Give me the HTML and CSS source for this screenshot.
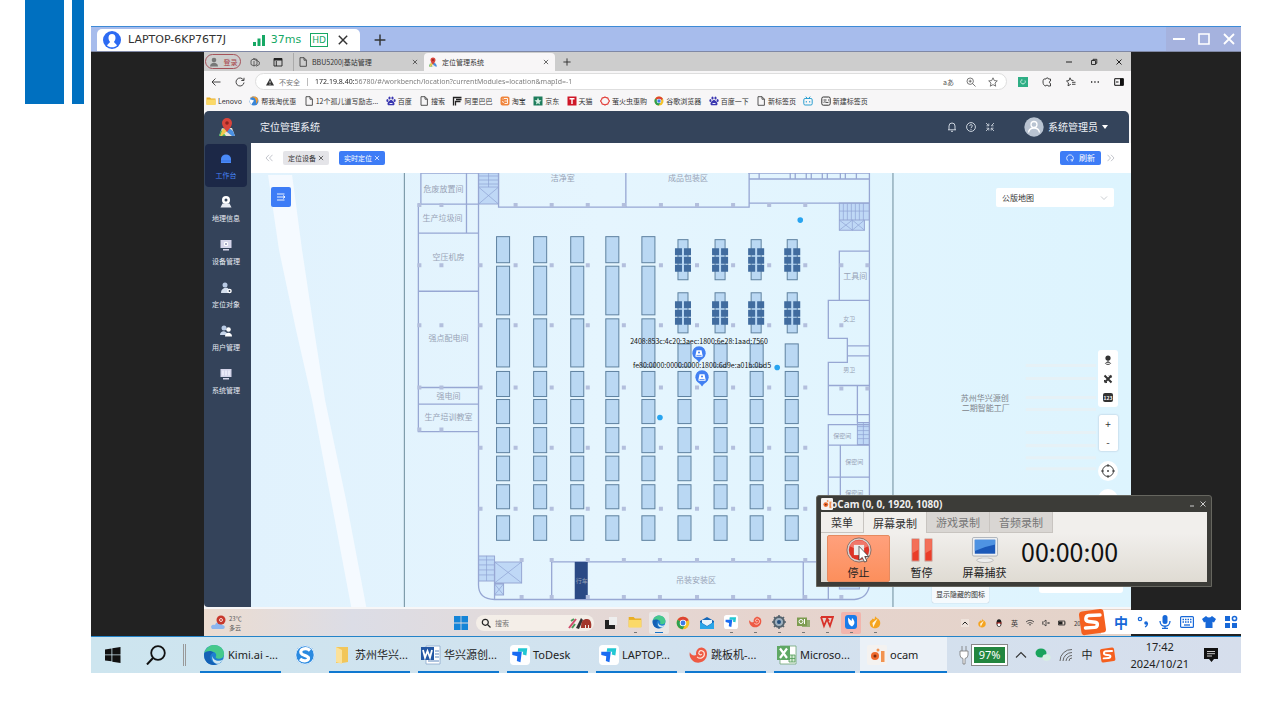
FILE: index.html
```html
<!DOCTYPE html>
<html lang="zh-CN">
<head>
  <meta charset="UTF-8">
  <meta name="viewport" content="width=device-width, initial-scale=1.0">
  <title>定位管理系统</title>
  <link rel="stylesheet" href="styles.css">
</head>
<body>
  <svg class="sprite" aria-hidden="true">
    <symbol id="i-page" viewBox="0 0 10 10"><path d="M2 .7h4l2.400 2.400v6.200H2zM6 .7v2.500h2.400" fill="none" stroke="#444" stroke-width=".9"/></symbol>
    <symbol id="i-x" viewBox="0 0 10 10"><path d="M1.500 1.500l7 7M8.500 1.500l-7 7" fill="none" stroke="currentColor" stroke-width="1.200"/></symbol>
    <symbol id="i-plus" viewBox="0 0 10 10"><path d="M5 .5v9M.5 5h9" fill="none" stroke="currentColor" stroke-width="1.200"/></symbol>
    <symbol id="i-paw" viewBox="0 0 10 10"><g fill="#3a36b0"><ellipse cx="3.500" cy="2" rx="1.100" ry="1.600"/><ellipse cx="6.500" cy="2" rx="1.100" ry="1.600"/><ellipse cx="1.400" cy="4.400" rx="1" ry="1.500"/><ellipse cx="8.600" cy="4.400" rx="1" ry="1.500"/><path d="M5 4c1.600 0 3.800 2.600 3.500 4.200C8.200 9.700 6.500 9.300 5 9.300s-3.200.4-3.500-1.100C1.200 6.600 3.400 4 5 4z"/></g><path d="M3.500 7.500h3" stroke="#fff" stroke-width=".9"/></symbol>
    <symbol id="i-map" viewBox="0 0 20 20"><path d="M2 19l3-8h10l3 8z" fill="#e9e4d8"/><path d="M2 19l2-6 5 6z" fill="#3fae5a"/><path d="M5 11l10 8h3l-2-5-4-3z" fill="#4a90e2"/><path d="M6 11l4 3-5 5H3z" fill="#f2c94c"/><path d="M10 15C7 11 5 9 5 6a5 5 0 0110 0c0 3-2 5-5 9z" fill="#d9443b"/><circle cx="10" cy="6" r="1.800" fill="#8c2420"/></symbol>
    <symbol id="i-edge" viewBox="0 0 24 24"><circle cx="12" cy="12" r="11" fill="#1d7fd0"/><path d="M1.300 10C3 3.500 8 1 12 1c7 0 11 5 11 9.500 0 4-3 5.500-6 5.500-2.500 0-3.500-1-3-2 1-1.500.5-5-3.500-5.500C6.500 8 2.500 9 1.300 10z" fill="#45c98c"/><path d="M1.300 10C4 7 10 7 11.500 9.500c-3 .5-4.500 4-3 7.500 1.500 3.500 5 5 8 4.500C9 25.500 0 20 1.300 10z" fill="#1461b5"/><path d="M10.500 13c0 4.500 6 7 11.500 4-1.500 2.500-3 3.600-5 4.500-4.500.5-8-4-6.500-8.500z" fill="#cfe6f2"/></symbol>
    <symbol id="i-chrome" viewBox="0 0 20 20"><circle cx="10" cy="10" r="9" fill="#f4c22b"/><path d="M10 10L2.200 5.500A9 9 0 0117.800 5.500L18 6z" fill="#dd4334"/><path d="M2.200 5.500A9 9 0 009.500 19l4-7L10 10z" fill="#2d9f50"/><circle cx="10" cy="10" r="4.600" fill="#fff"/><circle cx="10" cy="10" r="3.500" fill="#3c7be8"/></symbol>
    <symbol id="i-todesk" viewBox="0 0 22 22"><rect width="22" height="22" rx="4" fill="#fff"/><path d="M9 3.500h10l-1 8-4-1 .5-3H8.500z" fill="#22c7d2"/><path d="M2.500 7.500H13L11.500 19l-4-1.500.5-5L2.500 11z" fill="#1a6cf2"/></symbol>
    <symbol id="i-shell" viewBox="0 0 22 22"><path d="M2 8c2 4 5 4 7 3-1-5 3-9 7-8 5 1 6 7 4 11-3 6-11 7-15 3-2-2-4-5-3-9z" fill="#ee5a44"/><path d="M10 13c3 3 8 1 8-3s-5-5-6-2c-1 2 2 4 3 2" fill="none" stroke="#ffe6dc" stroke-width="1.300"/></symbol>
    <symbol id="i-flame" viewBox="0 0 16 16"><path d="M8 1c1.500 3 6 3 6 8 0 4-3 6-6 6s-6-2-6-6c0-3 3-3 3-5 1 0 2 1 2 1 1-1 1-3 1-4z" fill="#f5a41f"/><path d="M11 4L6 14l-1-5z" fill="#fff4dc"/></symbol>
    <symbol id="i-sogou" viewBox="0 0 26 26"><rect x="1" y="2" width="23" height="22" rx="3" fill="#f5601f" transform="rotate(-8 13 13)"/><path d="M19.500 6.500L9 7c-3 .3-4 5 0 5.500l6 .8c3 .5 2.500 4.500-.5 4.700L6 18.500" fill="none" stroke="#fff" stroke-width="3.200" stroke-linecap="round"/></symbol>
    <symbol id="i-ocam" viewBox="0 0 20 20"><rect width="20" height="20" rx="2" fill="#f4f2f0"/><circle cx="8" cy="11" r="4" fill="#ef6a2c"/><circle cx="8" cy="11" r="1.500" fill="#7a2b10"/><rect x="14" y="6" width="3.500" height="11" fill="#f29350"/><circle cx="11" cy="5" r="1.500" fill="#f29350"/></symbol>
    <symbol id="i-folder" viewBox="0 0 20 20"><path d="M1 3h7l2 2h9v12H1z" fill="#e9ae24"/><path d="M1 7h18v11H1z" fill="#fbd968"/></symbol>
  </svg>

  <div class="slide">
    <div class="stripes"><i class="stripe wide"></i><i class="stripe"></i></div>

    <main class="remote">
      <header class="remote-bar">
        <div class="remote-tab">
          <svg class="s18" viewBox="0 0 18 18"><circle cx="9" cy="9" r="9" fill="#2d6bf3"/><path d="M5.500 7a3.500 4 0 017 0c0 2-1 3-1.600 4l3.100 3.300C12 17 6 17 4 14.300L7.100 11C6.500 10 5.500 9 5.500 7z" fill="#fff"/></svg>
          <span class="remote-name">LAPTOP-6KP76T7J</span>
          <svg class="s12" viewBox="0 0 12 12"><path d="M0 8h3v4H0zM4.500 4.500h3V12h-3zM9 1h3v11H9z" fill="#16a864"/></svg>
          <span class="ping">37ms</span>
          <span class="hd">HD</span>
          <button class="plain" type="button" aria-label="关闭会话"><svg class="s12" aria-hidden="true"><use href="#i-x"/></svg></button>
        </div>
        <button class="plain add" type="button" aria-label="新建会话"><svg class="s12" aria-hidden="true"><use href="#i-plus"/></svg></button>
        <div class="remote-controls">
          <button class="plain" type="button" aria-label="最小化"><svg class="s14" viewBox="0 0 14 14"><path d="M1 7h12" stroke="#fff" stroke-width="2"/></svg></button>
          <button class="plain" type="button" aria-label="最大化"><svg class="s14" viewBox="0 0 14 14"><path d="M2 2h10v10H2z" fill="none" stroke="#fff" stroke-width="1.600"/></svg></button>
          <button class="plain" type="button" aria-label="关闭"><svg class="s14" viewBox="0 0 14 14"><path d="M2 2l10 10M12 2L2 12" stroke="#fff" stroke-width="1.800"/></svg></button>
        </div>
      </header>

      <div class="stage">
        <div class="guest">
          <div class="tabs">
            <button class="profile" type="button"><svg class="s10" viewBox="0 0 10 10"><circle cx="5" cy="3" r="2.300" fill="#777"/><path d="M1 9.500c0-5 8-5 8 0z" fill="#777"/></svg>登录</button>
            <svg class="s10 tab-tool" viewBox="0 0 10 10"><path d="M1 3.500L4 1.500l3 1v5L4 9 1 7.500zM4 4v5M3 2l4 1.500L9.300 5v2.500L6 9.300" fill="none" stroke="#444" stroke-width=".8"/></svg>
            <svg class="s10" viewBox="0 0 10 10"><path d="M1 1.500h8v7.500H1zM3.300 4v5" fill="none" stroke="#222" stroke-width=".9"/><path d="M1 1h8v2.500H1z" fill="#222"/></svg>
            <div class="tab">
              <svg class="s10"><use href="#i-page"/></svg><span>BBU5200|基站管理</span>
              <button class="plain" type="button" aria-label="关闭标签页"><svg class="s6" aria-hidden="true"><use href="#i-x"/></svg></button>
            </div>
            <div class="tab active">
              <svg class="s10"><use href="#i-map"/></svg><span>定位管理系统</span>
              <button class="plain" type="button" aria-label="关闭标签页"><svg class="s6" aria-hidden="true"><use href="#i-x"/></svg></button>
            </div>
            <button class="plain new-tab" type="button" aria-label="新标签页"><svg class="s8" aria-hidden="true"><use href="#i-plus"/></svg></button>
            <div class="win-controls">
              <button class="plain" type="button" aria-label="最小化"><svg class="s8" viewBox="0 0 8 8"><path d="M1 4h6" stroke="#222"/></svg></button>
              <button class="plain" type="button" aria-label="还原"><svg class="s8" viewBox="0 0 8 8"><path d="M1.500 2.500h4v4h-4zM3 2.500V1.300h3.800v4H5.500" fill="none" stroke="#222" stroke-width=".9"/></svg></button>
              <button class="plain" type="button" aria-label="关闭"><svg class="s8" viewBox="0 0 8 8"><path d="M1.500 1.500l5 5M6.500 1.500l-5 5" stroke="#222"/></svg></button>
            </div>
          </div>

          <div class="address-row">
            <button class="plain nav" type="button" aria-label="后退"><svg class="s10" viewBox="0 0 10 10"><path d="M9.500 5H1M4.500 1.500L1 5l3.500 3.500" fill="none" stroke="#333" stroke-width=".9"/></svg></button>
            <button class="plain nav" type="button" aria-label="刷新页面"><svg class="s10" viewBox="0 0 10 10"><path d="M8.500 3A4 4 0 109 5.500M9 .8v2.700H6.300" fill="none" stroke="#333" stroke-width=".9"/></svg></button>
            <div class="address">
              <svg class="s8" viewBox="0 0 8 8"><path d="M4 .3L8 7.600H0z" fill="#333"/><path d="M4 2.800v2.500M4 6v.8" stroke="#fff" stroke-width=".8"/></svg>
              <label class="insecure" for="url">不安全</label>
              <input class="url" id="url" type="text" value="172.19.8.40:56780/#/workbench/location?currentModules=location&amp;mapId=-1">
              <span class="addr-icons">
                <span class="read">aあ</span>
                <svg class="s10" viewBox="0 0 10 10"><circle cx="4.200" cy="4.200" r="3.200" fill="none" stroke="#555" stroke-width=".8"/><path d="M6.500 6.500L9.500 9.500M2.700 4.200h3M4.200 2.700v3" stroke="#555" stroke-width=".8"/></svg>
                <svg class="s10" viewBox="0 0 10 10"><path d="M5 .8l1.300 2.800 3 .3L7 6l.7 3.200L5 7.600 2.300 9.200 3 6 .7 3.900l3-.3z" fill="none" stroke="#555" stroke-width=".8"/></svg>
              </span>
            </div>
            <div class="ext">
              <svg class="s10" viewBox="0 0 10 10"><path d="M0 0h10v10H0z" fill="#2fae85"/><path d="M3 3.500a2.300 2.300 0 104 0M3 3h1.500" fill="none" stroke="#d9f5ea" stroke-width=".9"/></svg>
              <svg class="s10" viewBox="0 0 10 10"><path d="M2 2h2c0-1.500 2.500-1.500 2.500 0H8.500v2C7 4 7 6.500 8.500 6.500V9H6C6 7.800 4 7.800 4 9 2 9 1 7 1 5s.4-2.600 1-3z" fill="none" stroke="#333" stroke-width=".9"/></svg>
              <svg class="s10" viewBox="0 0 10 10"><path d="M4 .8l1.100 2.400 2.400.3M2 8.800l.5-2.900L.5 4l2.500-.5L4 .8M2 8.800l2.800-1.500M6 5.300h3.500M6 7.300h3.500" fill="none" stroke="#333" stroke-width=".9"/></svg>
              <svg class="s10" viewBox="0 0 10 10"><path d="M1 5h1.300M4.300 5h1.300M7.600 5h1.300" stroke="#222" stroke-width="1.300"/></svg>
              <svg class="s10" viewBox="0 0 10 10"><path d="M.7 1.700h8.600v6.600H.7z" fill="none" stroke="#111"/><path d="M6 1.500h3.500v7H6z" fill="#111"/><path d="M2 5h2.500" stroke="#111"/></svg>
            </div>
          </div>

          <nav class="bookmarks">
            <a href="#"><svg class="s10"><use href="#i-folder"/></svg>Lenovo</a>
            <a href="#"><svg class="s10" viewBox="0 0 10 10"><circle cx="5" cy="5" r="4.500" fill="#3a86d8"/><path d="M1 2c3-2 7 0 6 6C9 6 9.500 3 8 1.500 6 0 2 0 1 2z" fill="#f29b2e"/><path d="M0 3l5 1.500L2 9z" fill="#fff"/></svg>帮我淘优惠</a>
            <a href="#"><svg class="s10"><use href="#i-page"/></svg>12个孤儿道写励志...</a>
            <a href="#"><svg class="s10"><use href="#i-paw"/></svg>百度</a>
            <a href="#"><svg class="s10"><use href="#i-page"/></svg>搜索</a>
            <a href="#"><svg class="s10" viewBox="0 0 10 10"><path d="M1.500 9.500V1.500h8M3.500 9.500v-4h5M4 3.500h5.500" fill="none" stroke="#222" stroke-width="1.300"/></svg>阿里巴巴</a>
            <a href="#"><svg class="s10" viewBox="0 0 10 10"><rect x=".5" y=".5" width="9" height="9" rx="2" fill="#f0853c"/><path d="M2.500 3h1M4 2.500h3.500v5H4.500M2.500 5l1 2M4.500 5h2.500" fill="none" stroke="#fff" stroke-width=".9"/></svg>淘宝</a>
            <a href="#"><svg class="s10" viewBox="0 0 10 10"><path d="M.5.500h9v9h-9z" fill="#1e7d5c"/><path d="M5 1.500l1 2.500 2.500.5-2 1.500.5 2.500-2-1.300-2 1.300.5-2.500-2-1.500L4 4z" fill="#d8f0e4"/></svg>京东</a>
            <a href="#"><svg class="s10" viewBox="0 0 10 10"><path d="M.5.500h9v9h-9z" fill="#cf1626"/><path d="M2.500 2.800h5M5 2.800V8" stroke="#fff" stroke-width="1.400"/></svg>天猫</a>
            <a href="#"><svg class="s10" viewBox="0 0 10 10"><path d="M5 1l1.300.7 1.500.3.6 1.500L9.500 5l-1.100 1.500L7.800 8l-1.500.3L5 9l-1.300-.7L2.200 8l-.6-1.500L.5 5l1.100-1.500L2.200 2l1.500-.3z" fill="none" stroke="#e23b36" stroke-width="1.200"/></svg>萤火虫惠购</a>
            <a href="#"><svg class="s10"><use href="#i-chrome"/></svg>谷歌浏览器</a>
            <a href="#"><svg class="s10"><use href="#i-paw"/></svg>百度一下</a>
            <a href="#"><svg class="s10"><use href="#i-page"/></svg>新标签页</a>
            <a href="#" aria-label="哔哩哔哩"><svg class="s10" viewBox="0 0 10 10"><rect x=".8" y="2.500" width="8.400" height="6.500" rx="1.300" fill="none" stroke="#2a9fd0"/><path d="M2.800.6l1.400 1.700M7.200.6L5.800 2.300M3.300 5v1.500M6.700 5v1.500" stroke="#2a9fd0"/></svg></a>
            <a href="#"><svg class="s10" viewBox="0 0 10 10"><rect x=".8" y="1" width="8.400" height="8.200" rx="1.500" fill="none" stroke="#333"/><path d="M2.500 4h3M7 4h1M2.500 6.300c1.500-1.300 3 1 5 0" fill="none" stroke="#333" stroke-width=".9"/></svg>新建标签页</a>
          </nav>

          <div class="app">
            <header class="app-head">
              <svg class="s20"><use href="#i-map"/></svg>
              <h1>定位管理系统</h1>
              <div class="head-tools">
                <svg class="s10" viewBox="0 0 10 10"><path d="M2 7.800V4a3 3 0 016 0v3.800M1 7.800h8M4 9.300h2" fill="none" stroke="#dde3ec" stroke-width=".9"/></svg>
                <svg class="s10" viewBox="0 0 10 10"><circle cx="5" cy="5" r="4.400" fill="none" stroke="#dde3ec" stroke-width=".9"/><path d="M3.700 4c0-2 2.800-1.700 2.600 0C6.200 5 5 5 5 6.200M5 7v.9" fill="none" stroke="#dde3ec" stroke-width=".9"/></svg>
                <svg class="s10" viewBox="0 0 10 10"><path d="M1 1l2.500 2.500M9 1L6.500 3.500M1 9l2.500-2.500M9 9L6.500 6.500M1.500 3.800h2.300V1.500M8.500 3.800H6.200M3.800 8.500V6.200H1.500M6.200 8.500V6.200h2.300" fill="none" stroke="#dde3ec" stroke-width=".8"/></svg>
              </div>
              <button class="user" type="button">
                <svg class="s20" viewBox="0 0 20 20"><circle cx="10" cy="10" r="9.700" fill="#b9c4d2"/><circle cx="10" cy="7.500" r="3" fill="none" stroke="#fff" stroke-width="1.300"/><path d="M4.500 15.500c1-6 10-6 11 0" fill="none" stroke="#fff" stroke-width="1.300"/></svg>
                系统管理员
                <svg class="s6" viewBox="0 0 6 6"><path d="M0 1h6L3 5z" fill="#fff"/></svg>
              </button>
            </header>

            <div class="app-body">
              <nav class="side">
                <a class="on" href="#"><svg class="s14" viewBox="0 0 14 14"><path d="M2 11V7a5 4.500 0 0110 0v4z" fill="#4a8af8"/><path d="M2 9h10" stroke="#2f66d8" stroke-width=".7"/></svg>工作台</a>
                <a href="#"><svg class="s14" viewBox="0 0 14 14"><circle cx="7" cy="5" r="4" fill="#fff"/><circle cx="7" cy="5" r="1.500" fill="#34445b"/><path d="M1.500 12.500l2-4h7l2 4z" fill="#e6eaf2"/></svg>地理信息</a>
                <a href="#"><svg class="s14" viewBox="0 0 14 14"><path d="M1.500 2h11v8h-11zM4 11h6v1.500H4z" fill="#d5d5ea"/><circle cx="7" cy="6" r="2.200" fill="#fff"/><circle cx="7" cy="6" r="1" fill="#8c90b5"/></svg>设备管理</a>
                <a href="#"><svg class="s14" viewBox="0 0 14 14"><circle cx="6" cy="4" r="2.500" fill="#b8cae4"/><path d="M2 12c0-6 7-6 7.500-4v4z" fill="#d4dfee"/><circle cx="10.500" cy="10" r="2.300" fill="#fff"/><circle cx="10.500" cy="10" r=".9" fill="#34445b"/></svg>定位对象</a>
                <a href="#"><svg class="s14" viewBox="0 0 14 14"><circle cx="5" cy="4" r="2.500" fill="#b8cae4"/><path d="M1 11c0-5 7-5 7.500 0z" fill="#c6d5ea"/><circle cx="9.500" cy="5.500" r="2.300" fill="#fff"/><path d="M6 12.500c0-5 7-5 7 0z" fill="#fff"/></svg>用户管理</a>
                <a href="#"><svg class="s14" viewBox="0 0 14 14"><path d="M1.500 2h11v8h-11zM4 11h6v1.500H4z" fill="#d5d5ea"/><path d="M4 3.500v5M7 3.500v5M10 3.500v5" stroke="#f7f7ff" stroke-width="1.200"/></svg>系统管理</a>
              </nav>

              <section class="content">
                <div class="pages">
                  <svg class="s8 chev" viewBox="0 0 8 8"><path d="M4 .8L1 4l3 3.200M7.500.8l-3 3.200 3 3.200" fill="none" stroke="#b5b8c0" stroke-width=".8"/></svg>
                  <button class="page-tab" type="button">定位设备<svg class="s6"><use href="#i-x"/></svg></button>
                  <button class="page-tab current" type="button">实时定位<svg class="s6"><use href="#i-x"/></svg></button>
                  <button class="refresh" type="button"><svg class="s8" viewBox="0 0 8 8"><path d="M2.300 7A3.300 3.300 0 115.700 7M4.500 5.800h1.700v1.700" fill="none" stroke="#fff" stroke-width=".8"/></svg>刷新</button>
                  <svg class="s8 chev" viewBox="0 0 8 8"><path d="M.5.800l3 3.200-3 3.200M4 .8L7 4 4 7.200" fill="none" stroke="#b5b8c0" stroke-width=".8"/></svg>
                </div>

                <div class="map">
                  <svg class="plan" viewBox="251 173 880 433" preserveAspectRatio="xMidYMid slice">
                    <defs>
                      <linearGradient id="ground" x1="0" x2="1" y1="0" y2="0">
                        <stop offset="0" stop-color="#e1f2fd"/><stop offset=".4" stop-color="#e5f5fe"/><stop offset="1" stop-color="#ddf4fe"/>
                      </linearGradient>
                      <g id="lower">
                        <rect y="371" width="13" height="25"/><rect y="399" width="13" height="24"/><rect y="427" width="13" height="25"/>
                        <rect y="455.500" width="13" height="24.500"/><rect y="484" width="13" height="24"/><rect y="515" width="13" height="24.500"/>
                      </g>
                      <g id="full">
                        <rect y="236.500" width="13" height="26"/><rect y="266" width="13" height="48.500"/><rect y="318.500" width="13" height="48"/>
                        <use href="#lower"/>
                      </g>
                      <g id="desk">
                        <rect width="10" height="40"/>
                        <path class="seat" d="M-3 8.500h7v7h-7zM6 8.500h7v7H6zM-3 17h7v7h-7zM6 17h7v7H6zM-3 25h7v7h-7zM6 25h7v7H6z"/>
                      </g>
                      <g id="short">
                        <use href="#desk" x="0" y="239.500"/><use href="#desk" x="0" y="292.500"/>
                      </g>
                      <path id="pillars" d="M-2-2h4v4h-4zM34-2h4v4h-4zM70-2h4v4h-4zM106-2h4v4h-4zM143-2h4v4h-4zM179-2h4v4h-4zM215-2h4v4h-4zM251-2h4v4h-4zM287-2h4v4h-4z"/>
                      <g id="pin">
                        <path d="M0 9l-3-4a6.500 6.500 0 116 0z" fill="#4280f2"/><circle r="6.500" fill="#4280f2"/>
                        <path d="M-3.500 3.300v-1.500l1-5h5l1 5v1.500z" fill="#fff"/><circle cy="-1" r="1" fill="#4280f2"/><path d="M-2.500 2h5" stroke="#4280f2" stroke-width=".8"/>
                      </g>
                    </defs>
                    <path d="M251 173h880v433H251z" fill="url(#ground)"/>
                    <path class="road" d="M269 175h24l10 75 12 80 11 70 21 100 20 106h-15l-20-106-19-100-16-70-17-80z"/>
                    <path class="haze" d="M1025 365h70M1025 378h70M1025 397h70M1025 409h70M1025 432h70M1025 445h70M1025 457h70M1025 468h70"/>
                    <path class="border" d="M405 173v433M892.500 173v433"/>

                    <g class="stairs">
                      <path d="M479 173h20v31h-20zM839 203h30v17h-30zM839 220h25v10h-25zM857 422h12v22h-12zM479 555h16v25h-16zM495 561h27v21h-27zM495 583h9v11h-9zM839 585h20v3h-20z"/>
                    </g>
                    <path class="thin" d="M489 173v14M479 176h20M479 180h20M479 184h20M479 187h20l-20 17M479 187l20 17M839 211h30M843 203v17M847 203v17M851 203v17M855 203v17M859 203v17M863 203v17M852 220v10M839 220l13 10M852 220l-13 10M852 220l12 10M864 220l-12 10M863 422v22M857 426h12M857 430h12M857 434h12M857 438h12M487 555v25M479 559h16M479 564h16M479 569h16M479 574h16M495 561l27 21M522 561l-27 21M495 583l9 11M504 583l-9 11"/>
                    <g class="walls">
                      <path d="M421.500 204v-31h57M467 173v60M419 204h60M419 233h60M419 291h60M419 387h60M419 403.500h60M419 204v227h60"/>
                      <path d="M499 173v34h250v-34M626 173v34M749 179h120M749 203h120M748 173h121M759 173v6M790 173v6M795 173v6M806 173v6M811 173v6M822 173v6M827 173v6M840 173v6M845 173v6M856 173v6"/>
                      <path d="M479 173v411q0 14 16 14.500h359q13-1 15-14V173"/>
                      <path d="M869 251h-30v49h-11v38h19v24h-19v52h41M839 300h30M847 345.500h22M847 355.500h22M828 385h41M857 385v37M869 424h-41v74M828 444.500h41M840 444v60M828 476.500h41"/>
                      <path d="M495 561v37M552 598v-37h276v37M803 561v37"/>
                    </g>
                    <path d="M575 561h13v37h-13z" fill="#2b4a85"/>
                    <g class="pillar">
                      <use href="#pillars" x="516" y="205"/><use href="#pillars" x="516" y="265"/><use href="#pillars" x="516" y="325"/>
                      <use href="#pillars" x="516" y="387"/><use href="#pillars" x="516" y="447"/><use href="#pillars" x="516" y="508"/>
                      <path d="M520 557h4v4h-4zM520 594h4v4h-4z"/>
                      <use href="#pillars" x="552" y="559"/><use href="#pillars" x="552" y="596"/>
                      <path d="M418 203h4v4h-4zM440 203h4v4h-4zM418 263h4v4h-4zM440 263h4v4h-4zM479 263h4v4h-4zM418 323h4v4h-4zM440 323h4v4h-4zM479 323h4v4h-4zM418 385h4v4h-4zM440 385h4v4h-4zM479 385h4v4h-4zM418 427h4v4h-4zM440 427h4v4h-4zM479 445h4v4h-4zM479 506h4v4h-4zM839 263h4v4h-4zM865 263h4v4h-4zM839 323h4v4h-4zM839 386h4v4h-4zM865 386h4v4h-4z"/>
                    </g>
                    <g class="rack">
                      <use href="#full" x="497"/><use href="#full" x="534"/><use href="#full" x="571"/><use href="#full" x="606"/><use href="#full" x="642"/>
                      <use href="#short" x="678"/><use href="#short" x="715"/><use href="#short" x="751"/><use href="#short" x="787"/>
                      <rect x="678" y="343.500" width="13" height="23"/><rect x="714" y="343.500" width="13" height="23"/><rect x="750" y="343.500" width="13" height="23"/><rect x="785" y="343.500" width="13" height="23"/>
                      <use href="#lower" x="678"/><use href="#lower" x="714"/><use href="#lower" x="750"/><use href="#lower" x="785"/>
                    </g>
                    <g class="label">
                      <text x="444" y="192">危废放置间</text><text x="443" y="221">生产垃圾间</text><text x="449" y="260">空压机房</text>
                      <text x="449" y="341">强点配电间</text><text x="449" y="398">强电间</text><text x="449" y="419">生产培训教室</text>
                      <text x="563" y="181">洁净室</text><text x="688" y="181">成品包装区</text><text x="696" y="582">吊装安装区</text><text x="855" y="279">工具间</text>
                    </g>
                    <g class="label small">
                      <text x="849" y="321">女卫</text><text x="849" y="372">男卫</text><text x="842" y="437">保密间</text><text x="854" y="463">保密间</text><text x="854" y="494">保密间</text><text x="582" y="582">行车</text>
                    </g>
                    <g class="label place"><text x="984" y="400">苏州华兴源创</text><text x="985" y="410">二期智能工厂</text></g>
                    <g fill="#28a4f0"><circle cx="800" cy="220" r="2.800"/><circle cx="777" cy="367" r="2.800"/><circle cx="660" cy="417" r="2.800"/></g>
                    <use href="#pin" x="699" y="353"/><use href="#pin" x="702" y="377"/>
                    <g class="ip"><text x="699" y="344">2408:853c:4c20:3aec:1800:6e28:1aad:7560</text><text x="702" y="368">fe80:0000:0000:0000:1800:6d9e:a01b:0bd5</text></g>
                  </svg>

                  <button class="toggle" type="button" aria-label="展开列表"><svg class="s10" viewBox="0 0 10 10"><path d="M1 2h7.500M1 5h8M1 8h7.500M7 3.500L9 5 7 6.500" fill="none" stroke="#fff" stroke-width=".9"/></svg></button>
                  <div class="picker">
                    <select aria-label="地图"><option>公版地图</option></select>
                    <svg class="s8" viewBox="0 0 8 8"><path d="M1 2.500l3 3 3-3" fill="none" stroke="#c3c6cc" stroke-width=".9"/></svg>
                  </div>
                  <div class="map-tools">
                    <div class="tool-card">
                      <button class="plain" type="button" aria-label="位置"><svg class="s10" viewBox="0 0 10 10"><circle cx="5" cy="3" r="2.600" fill="#333"/><path d="M5 5v2.500M2.500 8.300c0-1.500 5-1.500 5 0s-5 1.500-5 0z" fill="none" stroke="#333" stroke-width=".9"/></svg></button>
                      <button class="plain" type="button" aria-label="测量"><svg class="s10" viewBox="0 0 10 10"><path d="M1.500 1.500l7 7M8.500 1.500l-7 7" stroke="#333" stroke-width="2"/><path d="M6 1.500l2.500 2.500M1 6l3 3" stroke="#333"/></svg></button>
                      <button class="plain" type="button" aria-label="编号"><span class="num">123</span></button>
                    </div>
                    <div class="zoom"><button type="button">+</button><button type="button">-</button></div>
                    <button class="round" type="button" aria-label="定位"><svg class="s14" viewBox="0 0 14 14"><circle cx="7" cy="7" r="5.500" fill="none" stroke="#444"/><circle cx="7" cy="7" r="1" fill="#444"/><path d="M7 0v3M7 11v3M0 7h3M11 7h3" stroke="#444"/></svg></button>
                    <button class="round" type="button" aria-label="图层"><svg class="s14" viewBox="0 0 14 14"><path d="M3 5l4-2 4 2-4 2z" fill="#555"/></svg></button>
                  </div>
                  <div class="scale"></div>
                  <div class="hint">显示隐藏的图标</div>
                </div>
              </section>
            </div>
          </div>

          <footer class="guest-bar">
            <div class="weather">
              <svg class="s16" viewBox="0 0 16 16"><path d="M2 14c-3-4 2-5 3-4 1-4 7-3 7 0 4 0 3 4 1 4z" fill="#8db6ee"/><circle cx="11" cy="5" r="4.500" fill="#c8372b"/><circle cx="11" cy="5" r="1.500" fill="none" stroke="#fff" stroke-width=".8"/></svg>
              <span>23℃<br>多云</span>
            </div>
            <div class="dock">
              <svg class="s14 start" viewBox="0 0 14 14"><path d="M0 0h6.600v6.600H0zM7.400 0H14v6.600H7.400zM0 7.400h6.600V14H0zM7.400 7.400H14V14H7.400z" fill="#1585d8"/></svg>
              <div class="search">
                <svg class="s10" viewBox="0 0 10 10"><circle cx="4.300" cy="4.300" r="3" fill="none" stroke="#222" stroke-width="1.200"/><path d="M6.500 6.500l3 3" stroke="#222" stroke-width="1.300"/></svg>
                <input type="text" placeholder="搜索" aria-label="搜索">
                <svg class="art" viewBox="0 0 24 12"><path d="M1 11l7-9" stroke="#d04a6a" stroke-width="2"/><path d="M3 4l3-2M4 11l3-4" stroke="#4a9a5a" stroke-width="2"/><path d="M8 11l5-10 2 2-4 9z" fill="#333"/><path d="M13 11c0-7 2-9 6-9s5 5 4 9h-2V8h-1v3h-2V8h-1v3z" fill="#a3372c"/></svg>
              </div>
              <svg class="s14" viewBox="0 0 14 14"><path d="M5 1h8v8H5z" fill="#eee"/><path d="M1 4h4v5h6v4H1z" fill="#222"/></svg>
              <span class="run"><svg class="s14"><use href="#i-folder"/></svg></span>
              <span class="run lit"><svg class="s14"><use href="#i-edge"/></svg></span>
              <svg class="s14"><use href="#i-chrome"/></svg>
              <svg class="s14" viewBox="0 0 14 14"><path d="M0 5l7-4 7 4v8H0z" fill="#1668b8"/><path d="M2 4h10v3L7 10 2 7z" fill="#e8f4fc"/><path d="M0 6l7 4.500L14 6v7H0z" fill="#2aa5e8"/></svg>
              <span class="run"><svg class="s14"><use href="#i-todesk"/></svg></span>
              <span class="run"><svg class="s14"><use href="#i-shell"/></svg></span>
              <span class="run"><svg class="s14" viewBox="0 0 14 14"><circle cx="7" cy="7" r="5" fill="#9fb0bf" stroke="#55636e" stroke-width="2"/><path d="M7 0v2.500M7 11.500V14M0 7h2.500M11.500 7H14M2 2l2 2M10 10l2 2M12 2l-2 2M4 10l-2 2" stroke="#55636e" stroke-width="1.600"/><circle cx="7" cy="7" r="2" fill="#274f7c"/></svg></span>
              <span class="run"><svg class="s14" viewBox="0 0 14 14"><path d="M1 2.500h10V11H1z" fill="#7d9c50"/><path d="M11 5h3v7H6v-1h5z" fill="#96ad74"/><circle cx="5" cy="6.500" r="2" fill="none" stroke="#fff"/><path d="M8.500 4v5" stroke="#fff"/></svg></span>
              <span class="run"><svg class="s14" viewBox="0 0 14 14"><path d="M1 2h5M1 2l3 9 3-7 3 7 3-9H6l3 4" fill="none" stroke="#d8322a" stroke-width="1.800"/></svg></span>
              <span class="run hot"><svg class="s14" viewBox="0 0 14 14"><rect x="1" y="0" width="12" height="14" rx="3" fill="#1a7cea"/><path d="M4 2.500l3.500 3.500L8 3c3 3 3.500 6 0 8.500C4.500 10 4 7 4 2.500z" fill="#fff"/></svg></span>
              <span class="run"><svg class="s14"><use href="#i-flame"/></svg></span>
            </div>
            <div class="guest-tray">
              <svg class="s8 up" viewBox="0 0 8 8"><path d="M1.500 5.500L4 3l2.500 2.500" fill="none" stroke="#222"/></svg>
              <svg class="s10"><use href="#i-flame"/></svg>
              <svg class="s8" viewBox="0 0 8 8"><ellipse cx="4" cy="4" rx="2.500" ry="3.800" fill="#1c1c1c"/><ellipse cx="4" cy="5.500" rx="1.500" ry="1.700" fill="#fff"/><path d="M1.500 4h5" stroke="#d8322a"/></svg>
              <span>英</span>
              <svg class="s8" viewBox="0 0 8 8"><path d="M0 3q4-3.500 8 0M1.500 4.500q2.500-2 5 0M3 6q1-.8 2 0" fill="none" stroke="#333" stroke-width=".8"/></svg>
              <svg class="s8" viewBox="0 0 8 8"><path d="M0 3h1.500L4 1v6L1.500 5H0zM5.500 3L7.500 5M7.500 3L5.500 5" fill="none" stroke="#333" stroke-width=".8"/></svg>
              <svg class="s8" viewBox="0 0 8 8"><path d="M.5 2h6.300v4H.5zM7 3.500v1" fill="none" stroke="#222" stroke-width=".8"/><path d="M1 2.500h3.500v3H1z" fill="#222"/></svg>
              <span class="guest-date">202</span>
            </div>
          </footer>
        </div>

        <section class="ocam">
          <header>
            <svg class="s12"><use href="#i-ocam"/></svg>
            <h2>oCam (0, 0, 1920, 1080)</h2>
            <button class="plain" type="button" aria-label="最小化"><svg class="s8" viewBox="0 0 8 8"><path d="M2 6h4" stroke="#ccc"/></svg></button>
            <button class="plain" type="button" aria-label="关闭"><svg class="s8" viewBox="0 0 8 8"><path d="M1.500 1.500l5 5M6.500 1.500l-5 5" stroke="#ccc"/></svg></button>
          </header>
          <div class="ocam-tabs">
            <button type="button">菜单</button>
            <button class="open" type="button">屏幕录制</button>
            <button class="shut" type="button">游戏录制</button>
            <button class="shut" type="button">音频录制</button>
          </div>
          <div class="ocam-body">
            <button class="stop" type="button">
              <svg class="s28" viewBox="0 0 28 28"><circle cx="14" cy="14" r="13" fill="#d8d4d2" stroke="#8a6a60"/><circle cx="14" cy="14" r="11" fill="#dd3327"/><path d="M4 10a11 11 0 0120 0q-10 6-20 0z" fill="#f0776a"/><path d="M8.500 8.500h11v11h-11z" fill="#eceaea"/><path d="M14 10v15l3.500-3 2.500 5 2.500-1-2.300-5h4.300z" fill="#fff" stroke="#333" stroke-width=".8"/></svg>
              停止
            </button>
            <button type="button">
              <svg class="s28" viewBox="0 0 28 28"><path d="M3 2h8v24H3zM17 2h8v24h-8z" fill="#ea3d28" stroke="#c9bdb8"/><path d="M3.500 2.500h7v11l-7 4zM17.500 2.500h7v11l-7 4z" fill="#f36f58"/></svg>
              暂停
            </button>
            <button type="button">
              <svg class="s28" viewBox="0 0 28 28"><ellipse cx="14" cy="25" rx="9" ry="2.500" fill="#eee" stroke="#aaa" stroke-width=".7"/><path d="M11 19h6v5h-6z" fill="#ddd"/><rect x=".5" y=".5" width="27" height="20" rx="1.500" fill="#eef0f2" stroke="#9aa0a8" stroke-width=".8"/><path d="M3 3h22v15H3z" fill="#1b58b8"/><path d="M3 3h22v5Q14 10 3 15z" fill="#4f93e2"/></svg>
              屏幕捕获
            </button>
            <output class="clock">00:00:00</output>
          </div>
        </section>

        <div class="ime">
          <svg class="ime-logo" aria-hidden="true"><use href="#i-sogou"/></svg>
          <div class="ime-tools">
            <b>中</b>
            <svg class="s14" viewBox="0 0 14 14"><circle cx="4" cy="4" r="1.700" fill="none" stroke="#1768d8" stroke-width="1.200"/><circle cx="10" cy="8" r="1.800" fill="#1768d8"/><path d="M11.500 8q0 3-2.500 4" fill="none" stroke="#1768d8" stroke-width="1.200"/></svg>
            <svg class="s14" viewBox="0 0 14 14"><rect x="4.500" y="0" width="5" height="9" rx="2.500" fill="#1768d8"/><path d="M2 6c0 7 10 7 10 0M7 11v3M4 13.500h6" fill="none" stroke="#1768d8" stroke-width="1.300"/></svg>
            <svg class="s14" viewBox="0 0 14 14"><rect x=".6" y="1.600" width="12.800" height="10.800" rx="1" fill="none" stroke="#1768d8" stroke-width="1.200"/><path d="M2.500 4.500h9M2.500 7h9" stroke="#1768d8" stroke-width="1.500" stroke-dasharray="1.500 1"/><path d="M4 10h6" stroke="#1768d8" stroke-width="1.300"/></svg>
            <svg class="s14" viewBox="0 0 14 14"><path d="M4 1q3 3 6 0l4 3-2 3.500-1.500-.8V13h-7V6.700L2 7.500 0 4z" fill="#1768d8"/></svg>
            <svg class="s14" viewBox="0 0 14 14"><path d="M1 1h5v5H1zM1 8h5v5H1zM8 8h5v5H8z" fill="#1768d8"/><circle cx="10.500" cy="3.500" r="2.100" fill="none" stroke="#1768d8" stroke-width="1.500"/></svg>
          </div>
        </div>
      </div>

      <footer class="host-bar">
        <svg class="s16 host-start" viewBox="0 0 16 16"><path d="M0 2.500l6.500-1v6H0zM7.300 1.300L15.500 0v7.500H7.300zM0 8.300h6.500v6L0 13.500zM7.300 8.300h8.200V16l-8.200-1.300z" fill="#111"/></svg>
        <svg class="s20 host-search" viewBox="0 0 20 20"><circle cx="12" cy="8" r="6.800" fill="none" stroke="#111" stroke-width="1.800"/><path d="M7 13l-6 6.500" stroke="#111" stroke-width="2"/></svg>
        <i class="grip"></i>
        <a class="task" href="#"><svg class="s22"><use href="#i-edge"/></svg>Kimi.ai -...</a>
        <a class="pinned" href="#" aria-label="搜狗浏览器"><svg class="s20" viewBox="0 0 20 20"><circle cx="10" cy="10" r="9.700" fill="#2a8ae0"/><circle cx="10" cy="10" r="9.300" fill="none" stroke="#fff" stroke-width="1"/><path d="M15 5.500C11 2 4.500 4 6 8c1 2.700 7 2.500 7.500 5 .5 3-5 4-8.500 1" fill="none" stroke="#fff" stroke-width="3.200"/></svg></a>
        <a class="task" href="#"><svg class="s20" viewBox="0 0 20 20"><path d="M4 2h12v15l-6 1H4z" fill="#f2c65a"/><path d="M4 2l6 3v14l-6-2z" fill="#fbe19a"/></svg>苏州华兴...</a>
        <a class="task" href="#"><svg class="s20" viewBox="0 0 20 20"><path d="M5 1h14v18H5z" fill="#fff" stroke="#8aa7cc" stroke-width=".8"/><path d="M14 6h4M14 9h4M14 12h4M7 16h11" stroke="#5f87bd"/><path d="M0 2h13v13H0z" fill="#2357a4"/><path d="M2 5l2 7.500L6.500 6 9 12.500 11 5" fill="none" stroke="#fff" stroke-width="1.800"/></svg>华兴源创...</a>
        <a class="task" href="#"><svg class="s20"><use href="#i-todesk"/></svg>ToDesk</a>
        <a class="task" href="#"><svg class="s20"><use href="#i-todesk"/></svg>LAPTOP...</a>
        <a class="task" href="#"><svg class="s20"><use href="#i-shell"/></svg>跳板机-...</a>
        <a class="task" href="#"><svg class="s20" viewBox="0 0 20 20"><path d="M3 1h16v18H3z" fill="#fff" stroke="#6fa575" stroke-width=".8"/><path d="M12 10h6v7h-6zM12 13.500h6M15 10v7" fill="#d5ecd3" stroke="#4f9a55" stroke-width=".8"/><path d="M0 1h13v14H0z" fill="#5fa864"/><path d="M3 3.500l7 9.500M10 3.500L3 13" stroke="#fff" stroke-width="2.200"/></svg>Microso...</a>
        <a class="task front" href="#"><svg class="s20"><use href="#i-ocam"/></svg>ocam</a>

        <div class="host-tray">
          <svg class="plug" viewBox="0 0 10 20"><path d="M3 1v5M7 1v5M1 6h8v4q0 3-3 3.500V19H4v-5.500Q1 13 1 10z" fill="#fff" stroke="#777" stroke-width=".8"/></svg>
          <span class="battery">97%</span>
          <svg class="s12" viewBox="0 0 12 12"><path d="M1 8.500l5-5 5 5" fill="none" stroke="#333" stroke-width="1.100"/></svg>
          <svg class="s16" viewBox="0 0 16 16"><ellipse cx="6" cy="6" rx="5.500" ry="4.500" fill="#1aa45c"/><ellipse cx="11.500" cy="10.500" rx="4" ry="3.300" fill="#d7f0e2"/></svg>
          <svg class="s14" viewBox="0 0 14 14"><path d="M1 13A11.500 11.500 0 0113 1.500M4 13A9 9 0 0113 4.500M7 13A6 6 0 0113 7.500M10 13a3 3 0 013-3" fill="none" stroke="#666"/></svg>
          <span class="lang">中</span>
          <svg class="s16"><use href="#i-sogou"/></svg>
          <time class="when" datetime="2024-10-21T17:42">17:42<br>2024/10/21</time>
          <svg class="s16" viewBox="0 0 16 16"><path d="M1 1h14v11h-4l-2.500 3L6 12H1z" fill="#111"/><path d="M4 4.500h8M4 6.700h8M4 9h5" stroke="#ddd" stroke-width=".9"/></svg>
        </div>
      </footer>
    </main>
  </div>
</body>
</html>
```

FILE: styles.css
```css
* {
  box-sizing: border-box;
  margin: 0;
  padding: 0;
}
body {
  background: #fff;
  font-family: "Noto Sans CJK SC", "Noto Sans", sans-serif;
  font-size: 7px;
  line-height: 10px;
  color: #333;
}
svg {
  display: block;
  flex: none;
}
a {
  color: inherit;
  text-decoration: none;
}
button, input, select {
  font: inherit;
  color: inherit;
  border: 0;
  background: none;
  min-width: 0;
}
h1, h2 {
  font-size: 10px;
  font-weight: normal;
}
.sprite {
  position: absolute;
  width: 0;
  height: 0;
}
.plain {
  display: grid;
  place-items: center;
}

/* icon sizes */
.s6 { width: 6px; height: 6px; }
.s8 { width: 8px; height: 8px; }
.s10 { width: 10px; height: 10px; }
.s12 { width: 12px; height: 12px; }
.s14 { width: 14px; height: 14px; }
.s16 { width: 16px; height: 16px; }
.s18 { width: 18px; height: 18px; }
.s20 { width: 20px; height: 20px; }
.s22 { width: 22px; height: 22px; }
.s28 { width: 28px; height: 26px; }

.slide {
  display: flex;
  gap: 7px;
  min-height: 100vh;
  padding: 0 39px 47px 25px;
}
.stripes {
  display: flex;
  gap: 8px;
  height: 104px;
}
.stripe {
  width: 12px;
  background: #0070c0;
}
.stripe.wide {
  width: 39px;
}
.remote {
  flex: 1;
  min-width: 0;
  display: flex;
  flex-direction: column;
  margin-top: 26px;
}

/* remote session bar */
.remote-bar {
  display: flex;
  align-items: flex-end;
  height: 26px;
  background: #a7bcec;
  border-top: 1px solid #3d8ad6;
  border-bottom: 1px solid #7f88a5;
  font-family: "DejaVu Sans", sans-serif;
  font-size: 11px;
}
.remote-tab {
  display: flex;
  align-items: center;
  width: 263px;
  height: 22px;
  margin-left: 6px;
  padding: 0 11px 0 6px;
  background: #fff;
  border-radius: 5px 5px 0 0;
}
.remote-name {
  flex: 1;
  margin-left: 7px;
}
.ping {
  margin: 0 9px 0 6px;
  color: #16a864;
}
.hd {
  margin-right: 9px;
  padding: 0 1px;
  border: 1px solid #16a864;
  color: #16a864;
  font-size: 9px;
  line-height: 12px;
}
.add {
  width: 40px;
  height: 22px;
}
.remote-controls {
  display: flex;
  justify-content: space-around;
  align-items: center;
  width: 75px;
  height: 24px;
  margin-left: auto;
  background: #a5b2de;
}

/* mirrored desktop */
.stage {
  position: relative;
  flex: 1;
  display: flex;
  padding: 0 110px 0 113px;
  background: #222;
}
.guest {
  flex: 1;
  min-width: 0;
  display: flex;
  flex-direction: column;
  background: #f7f6f7;
}
.tabs {
  display: flex;
  align-items: center;
  height: 19px;
  background: #cdcdcd;
}
.profile {
  display: flex;
  align-items: center;
  justify-content: center;
  gap: 5px;
  width: 36px;
  height: 15px;
  margin: 0 9px 0 1px;
  border: 1px solid #a5525a;
  border-radius: 8px;
  color: #a8434a;
}
.tab-tool {
  margin-right: 13px;
}
.tab {
  display: flex;
  align-items: center;
  gap: 4px;
  width: 131px;
  height: 18px;
  padding: 0 6px 0 4px;
}
.tab + .tab {
  margin-left: 0;
}
.tab:not(.active) {
  margin-left: 10px;
  border-left: 1px solid #aaa;
}
.tab span {
  flex: 1;
  white-space: nowrap;
}
.tab.active {
  align-self: flex-end;
  border-radius: 4px 4px 0 0;
  background: #f8f6f7;
}
.new-tab {
  margin-left: 8px;
}
.win-controls {
  display: flex;
  gap: 17px;
  margin: 0 8px 0 auto;
}
.address-row {
  display: flex;
  align-items: center;
  height: 20px;
  padding: 2px 7px 1px 7px;
}
.nav {
  width: 10px;
  margin-right: 14px;
}
.nav + .nav {
  margin-right: 10px;
}
.address {
  flex: 1;
  display: flex;
  align-items: center;
  height: 17px;
  padding: 0 8px 0 10px;
  background: #fff;
  border: 1px solid #dedede;
  border-radius: 9px;
}
.insecure {
  margin-left: 5px;
  padding-right: 7px;
  border-right: 1px solid #bbb;
  color: #777;
  line-height: 8px;
}
/* the host part of the address is darker than its path */
.url {
  flex: 1;
  margin-left: 7px;
  font-family: "Noto Sans", sans-serif;
  outline: 0;
  background: linear-gradient(to right, #222 39px, #777 39px);
  background-clip: text;
  -webkit-background-clip: text;
  -webkit-text-fill-color: transparent;
}
.addr-icons {
  display: flex;
  align-items: center;
  gap: 12px;
}
.read {
  color: #555;
}
.ext {
  display: flex;
  gap: 14px;
  margin-left: 11px;
}
.bookmarks {
  display: flex;
  justify-content: space-between;
  align-items: center;
  height: 20px;
  max-width: 666px;
  padding: 0 2px;
}
.bookmarks a {
  display: flex;
  align-items: center;
  gap: 2px;
  white-space: nowrap;
}

/* location system */
.app {
  flex: 1;
  display: flex;
  flex-direction: column;
  margin-bottom: 2px;
}
.app-head {
  display: flex;
  align-items: center;
  height: 32px;
  padding: 0 21px 0 13px;
  margin-right: 2px;
  background: #34445b;
  border-radius: 5px 5px 0 0;
  color: #eef1f6;
}
.app-head h1 {
  margin-left: 23px;
}
.head-tools {
  display: flex;
  gap: 9px;
  margin-left: auto;
}
.user {
  display: flex;
  align-items: center;
  gap: 4px;
  margin-left: 29px;
  font-size: 10px;
}
.app-body {
  flex: 1;
  display: flex;
}
.side {
  width: 47px;
  background: #34435a;
  border-radius: 0 0 0 4px;
}
.side a {
  display: flex;
  flex-direction: column;
  align-items: center;
  gap: 4px;
  width: 42px;
  height: 43px;
  margin-left: 1px;
  padding-top: 8px;
  color: #e6eaf2;
}
.side .on {
  margin-top: 1px;
  background: #1c2847;
  border-radius: 4px;
  color: #4784f5;
}
.content {
  flex: 1;
  min-width: 0;
  display: flex;
  flex-direction: column;
}
.pages {
  display: flex;
  align-items: center;
  gap: 10px;
  height: 30px;
  padding: 0 16px 0 14px;
  background: #fff;
}
.page-tab {
  display: flex;
  align-items: center;
  gap: 2px;
  height: 14px;
  padding: 0 5px;
  border-radius: 2px;
  background: #e4e4e8;
}
.page-tab.current {
  background: #3d7cf6;
  color: #fff;
}
.refresh {
  display: flex;
  align-items: center;
  gap: 5px;
  height: 14px;
  margin: 0 -4px 0 auto;
  padding: 0 6px;
  border-radius: 2px;
  background: #3d7cf6;
  color: #fff;
  font-size: 8px;
}
.map {
  position: relative;
  flex: 1;
  overflow: hidden;
}
.plan {
  width: 100%;
  height: 100%;
}
.road {
  fill: #f5faff;
}
.haze {
  stroke: #e6f1f6;
  stroke-width: 3;
}
.border {
  fill: none;
  stroke: #6d8c9c;
}
.walls {
  fill: none;
  stroke: #97a7d3;
  stroke-width: 1.300;
}
.stairs {
  fill: #bfd8f6;
  stroke: #97a7d3;
}
.thin {
  fill: none;
  stroke: #8fa4d4;
  stroke-width: .7;
}
.pillar {
  fill: #b3bfdd;
}
.rack {
  fill: #bad8f3;
  stroke: #5f82a0;
}
.seat {
  fill: #416c9f;
  stroke: none;
}
.label {
  fill: #98a3b6;
  font-size: 8px;
  text-anchor: middle;
}
.label.small {
  font-size: 6px;
}
.label.place {
  fill: #80858c;
}
.ip {
  fill: #111;
  font-size: 7px;
  text-anchor: middle;
}

/* controls that float over the map */
.toggle {
  position: absolute;
  top: 14px;
  left: 20px;
  display: grid;
  place-items: center;
  width: 20px;
  height: 20px;
  border-radius: 2px;
  background: #3d7cf6;
}
.picker {
  position: absolute;
  top: 15px;
  right: 17px;
  display: flex;
  align-items: center;
  width: 118px;
  height: 19px;
  padding: 0 6px;
  border-radius: 2px;
  background: #fff;
}
.picker select {
  flex: 1;
  appearance: none;
  font-size: 8px;
}
.map-tools {
  position: absolute;
  top: 177px;
  right: 13px;
  display: flex;
  flex-direction: column;
  align-items: center;
  gap: 8px;
}
.tool-card {
  display: grid;
  grid-auto-rows: 19px;
  width: 20px;
  border-radius: 3px;
  background: #fff;
}
.num {
  padding: 0 1px;
  border-radius: 2px;
  background: #333;
  color: #fff;
  font-size: 5px;
  font-weight: bold;
  line-height: 9px;
}
.zoom {
  display: grid;
  grid-auto-rows: 18px;
  width: 19px;
  margin-bottom: 2px;
  border-radius: 2px;
  background: #fff;
  box-shadow: 0 0 2px #a5b6cc;
  font-size: 10px;
}
.round {
  display: grid;
  place-items: center;
  width: 20px;
  height: 20px;
  border-radius: 50%;
  background: #fff;
}
.scale {
  position: absolute;
  right: 8px;
  bottom: 14px;
  width: 84px;
  height: 14px;
  border-radius: 3px;
  background: #fff;
}
.hint {
  position: absolute;
  right: 142px;
  bottom: 4px;
  height: 18px;
  padding: 4px 4px;
  border-radius: 2px;
  background: #f5fafd;
  box-shadow: 0 0 1px #8fa3b5;
}

/* mirrored taskbar */
.guest-bar {
  display: flex;
  align-items: center;
  height: 27px;
  padding-left: 6px;
  background: linear-gradient(to right, #ecdcd0, #dcdde6 16%, #e3dad9 35%, #e6d4ce 60%, #e4d3c9);
}
.weather {
  display: flex;
  align-items: center;
  gap: 3px;
  width: 244px;
  font-size: 6px;
  line-height: 9px;
  color: #555;
}
.dock {
  display: flex;
  align-items: center;
  gap: 10px;
}
.search {
  display: flex;
  align-items: center;
  gap: 4px;
  width: 118px;
  height: 16px;
  padding: 0 2px 0 5px;
  margin-left: -2px;
  border-radius: 8px;
  background: #f4eee8;
}
.search input {
  flex: 1;
  outline: 0;
}
.art {
  width: 24px;
  height: 12px;
}
.run {
  display: grid;
  justify-items: center;
  align-content: center;
  height: 22px;
  padding-top: 3px;
}
.run::after {
  content: "";
  width: 3px;
  height: 1px;
  margin-top: 3px;
  background: #777;
}
.run.lit, .run.hot {
  border-radius: 2px;
  background: #eae7e6;
  box-shadow: -3px 0 #eae7e6, 3px 0 #eae7e6;
}
.run.hot {
  background: #f2b5ad;
  box-shadow: -3px 0 #f2b5ad, 3px 0 #f2b5ad;
}
.run.lit::after {
  width: 8px;
  background: #1672c8;
}
.guest-tray {
  display: flex;
  align-items: center;
  gap: 8px;
  margin: 0 47px 0 auto;
  line-height: 8px;
}
.up {
  background: #efe3dc;
}
.guest-date {
  align-self: flex-end;
  font-size: 6px;
}

/* recorder window */
.ocam {
  position: absolute;
  right: 29px;
  bottom: 49px;
  width: 396px;
  padding: 0 4px 4px;
  border: 1px solid #66665f;
  border-radius: 3px 3px 0 0;
  background: #3c3c38;
}
.ocam header {
  display: flex;
  align-items: center;
  gap: 3px;
  height: 16px;
  color: #eee;
}
.ocam h2 {
  flex: 1;
  margin-left: -5px;
  font-family: "Noto Sans", sans-serif;
  font-weight: bold;
}
.ocam-tabs {
  display: flex;
  height: 21px;
  background: #f1efec;
  font-size: 11px;
}
.ocam-tabs button {
  padding: 0 9px;
  border-right: 1px solid #c8c4c0;
  border-bottom: 1px solid #c8c4c0;
}
.ocam-tabs button:first-child {
  padding: 0 10px;
}
.ocam-tabs .open {
  border-bottom: 0;
}
.ocam-tabs .shut {
  background: #d9d6d3;
  color: #777;
}
.ocam-body {
  display: flex;
  height: 49px;
  padding: 2px 6px 0;
  background: linear-gradient(#f1efec, #dfdbd3);
  font-size: 11px;
}
.ocam-body button {
  display: flex;
  flex-direction: column;
  align-items: center;
  gap: 1px;
  width: 63px;
  height: 47px;
  padding-top: 2px;
  line-height: 16px;
  color: #222;
}
.ocam-body .stop {
  padding-top: 1px;
  border: 1px solid #e58a60;
  border-radius: 2px;
  background: linear-gradient(#ffa07c, #fc8f5c);
}
.clock {
  margin-left: 5px;
  font-size: 25px;
  line-height: 32px;
  color: #111;
}

/* input method strip */
.ime {
  position: absolute;
  right: 0;
  bottom: 0;
  display: flex;
  align-items: center;
}
.ime-logo {
  z-index: 1;
  width: 28px;
  height: 28px;
  margin-right: -6px;
}
.ime-tools {
  display: flex;
  align-items: center;
  gap: 8px;
  height: 24px;
  padding: 0 3px 0 13px;
  background: #fff;
  color: #1768d8;
  font-size: 14px;
}

/* host taskbar */
.host-bar {
  display: flex;
  align-items: center;
  height: 37px;
  border-top: 1px solid #2383c8;
  background: linear-gradient(to right, #cde5ef, #d2e2ef 50%, #d6deec);
  font-family: "Noto Sans", "Noto Sans CJK SC", sans-serif;
  font-size: 11px;
  color: #222;
}
.host-start {
  margin: 0 25px 0 14px;
}
.host-search {
  margin-right: 17px;
}
.grip {
  width: 3px;
  height: 22px;
  margin-right: 14px;
  border: 1px solid #999;
  border-width: 0 1px;
}
.task {
  display: flex;
  align-items: center;
  gap: 3px;
  width: 81px;
  height: 100%;
  margin-right: 8px;
  padding: 2px 0 0 3px;
  border-bottom: 2px solid #0f78d0;
  white-space: nowrap;
}
.pinned {
  width: 40px;
  padding: 0 6px;
}
.front {
  width: 87px;
  padding-left: 7px;
  margin-left: -3px;
  background: #ebf1f7;
}
.host-tray {
  display: flex;
  align-items: center;
  gap: 8px;
  margin: 0 22px 0 auto;
}
.plug {
  width: 10px;
  height: 20px;
}
.battery {
  margin-left: -5px;
  padding: 0 5px;
  border: 2px solid #fff;
  outline: 1px solid #888;
  background: #23863f;
  color: #fff;
  line-height: 16px;
}
.when {
  margin: 0 6px;
  line-height: 17px;
  text-align: center;
}
```
